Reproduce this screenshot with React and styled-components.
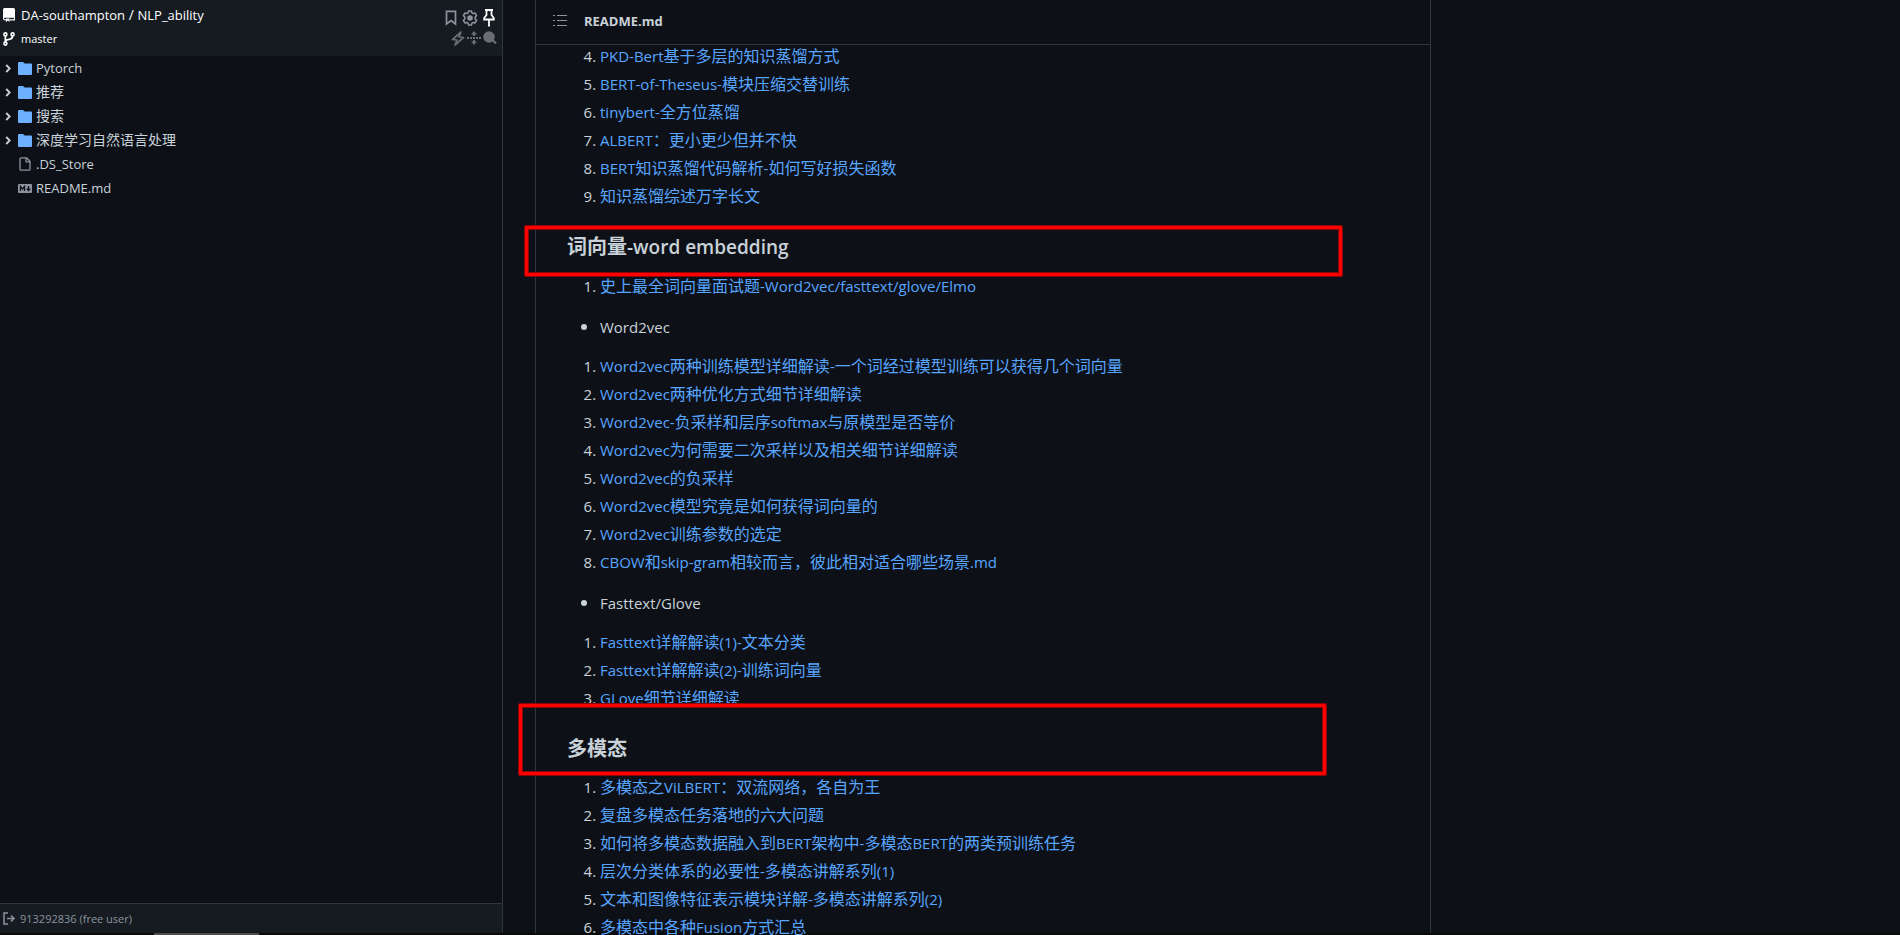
import React from 'react';
import styled, { createGlobalStyle } from 'styled-components';

const colors = {
  canvas: '#0d1117',
  subtle: '#161b22',
  border: '#30363d',
  text: '#c9d1d9',
  muted: '#8b949e',
  link: '#58a6ff',
  folder: '#6cb0ff',
};

const GlobalStyle = createGlobalStyle`
  * { box-sizing: border-box; }
  body {
    margin: 0;
    background: ${colors.canvas};
    color: ${colors.text};
    font-family: "Open Sans", "Noto Sans CJK SC", sans-serif;
    font-size: 16px;
    line-height: 24px;
    overflow: hidden;
  }
`;

const Page = styled.div`
  display: flex;
  height: 100vh;
  border-bottom: 2px solid #0a0a0a;
`;

const Sidebar = styled.aside`
  position: relative;
  display: flex;
  flex-direction: column;
  flex: 0 0 503px;
  border-right: 1px solid ${colors.border};
`;

const SidebarHeader = styled.header`
  display: flex;
  justify-content: space-between;
  height: 56px;
  padding: 3px 5px 4px 3px;
  background: ${colors.subtle};
`;

const HeaderLines = styled.div`
  display: flex;
  flex-direction: column;
`;

const HeaderLine = styled.div`
  display: flex;
  align-items: center;
  gap: 6px;
  height: 24px;
  color: #fff;
  font-size: ${(p) => (p.$small ? 11 : 14)}px;
`;

const HeaderLink = styled.a`
  color: inherit;
  text-decoration: none;
`;

const Tools = styled.div`
  display: flex;
  flex-direction: column;
  align-items: flex-end;
  padding-top: 5px;
`;

const ToolRow = styled.div`
  display: flex;
  align-items: center;
  gap: ${(p) => p.$gap}px;
  height: 20px;
  padding-right: ${(p) => p.$inset}px;
`;

const IconButton = styled.button`
  display: flex;
  padding: 0;
  border: 0;
  background: none;
  color: ${(p) => (p.$active ? '#fff' : p.$dim ? '#6a6e74' : colors.muted)};
  cursor: pointer;
`;

const Tree = styled.ul`
  flex: 1;
  margin: 0;
  padding: 0;
  list-style: none;
`;

const TreeItem = styled.li`
  display: grid;
  grid-template-columns: 12px 14px 1fr;
  align-items: center;
  column-gap: 4px;
  height: 24px;
  padding-left: 2px;
  font-size: 14px;
  white-space: nowrap;
`;

const TreeIcon = styled.span`
  display: flex;
  justify-content: center;
  color: ${(p) => p.$color};
`;

const TreeLink = styled.a`
  color: ${colors.text};
  text-decoration: none;
`;

const SidebarFooter = styled.footer`
  display: flex;
  align-items: center;
  gap: 4px;
  height: 30px;
  padding-left: 3px;
  border-top: 1px solid ${colors.border};
  background: ${colors.subtle};
  color: ${colors.muted};
  font-size: 11px;
`;

const ScrollThumb = styled.div`
  position: absolute;
  bottom: -2px;
  left: 154px;
  width: 105px;
  height: 2px;
  background: #4d4d4d;
`;

const Main = styled.main`
  display: flex;
  flex: 1;
  min-width: 0;
  padding: 0 32px;
`;

const Readme = styled.article`
  display: flex;
  flex-direction: column;
  flex: 0 1 896px;
  min-width: 0;
  border: solid ${colors.border};
  border-width: 0 1px;
`;

const ReadmeHeader = styled.header`
  display: flex;
  flex: none;
  align-items: center;
  gap: 16px;
  height: 45px;
  padding: 0 16px 2px;
  border-bottom: 1px solid ${colors.border};
`;

const FileName = styled.h2`
  margin: 0;
  font-size: 13px;
  font-weight: 700;
`;

const Body = styled.div`
  flex: 1;
  min-height: 0;
  padding: 0 32px 0 31px;
`;

const Heading = styled.h3`
  position: relative;
  margin: 24px 0 14px;
  font-size: 20px;
  font-weight: 600;
  line-height: 27px;
`;

const Marker = styled.span`
  position: absolute;
  top: ${(p) => p.$top}px;
  right: ${(p) => p.$right}px;
  left: ${(p) => p.$left}px;
  height: ${(p) => p.$height}px;
  border: 3px solid #f00;
  border-radius: 1px;
  box-shadow: 0 0 0 1px #8b0509, inset 0 0 0 1px #8b0509;
  pointer-events: none;
`;

const Ordered = styled.ol`
  margin: 0 0 16px;
  padding-left: 33px;
`;

const Bullets = styled.ul`
  margin: 0 0 16px;
  padding-left: 33px;
`;

const Item = styled.li`
  height: 24px;
  line-height: 22px;
  white-space: nowrap;

  & + & {
    margin-top: 4px;
  }

  &::marker {
    font-size: ${(p) => (p.$bullet ? 18 : 15)}px;
  }
`;

const DocLink = styled.a`
  color: ${colors.link};
  text-decoration: none;
`;

const Latin = styled.span`
  font-size: ${(p) => p.$size}px;
`;

// Latin letters are set one pixel smaller than the Chinese ones beside them.
function Mixed({ children, size = 15 }) {
  return children
    .split(/([\x20-\x7e]+)/)
    .filter(Boolean)
    .map((part, i) => (/^[\x20-\x7e]/.test(part) ? <Latin key={i} $size={size}>{part}</Latin> : part));
}

function RepoIcon() {
  return (
    <svg width="12" height="14" viewBox="0 0 12 14" aria-hidden="true">
      <path fill="#fff" d="M1.500 0h9A1.500 1.500 0 0 1 12 1.500v8.700H0V1.500A1.500 1.500 0 0 1 1.500 0Z" />
      <path fill="none" stroke="#fff" strokeWidth="1.200" d="M.6 9v1.600c0 .8.500 1.200 1.200 1.200H3M7 11.800h4.400V9" />
      <path fill="#161b22" d="M1.300 9.800h9.500v1.200H1.300Z" />
      <path fill="#fff" d="M3 10.500h3.600V14L4.800 12.600 3 14Z" />
    </svg>
  );
}

function BranchIcon() {
  return (
    <svg width="12" height="14" viewBox="0 0 12 14" fill="none" stroke="#fff" aria-hidden="true">
      <path strokeWidth="1.800" d="M2.400 3v8M9.600 3.500c0 3-1.500 3.700-3.600 3.900S2.400 8.500 2.400 10" />
      <circle cx="2.400" cy="2.400" r="1.500" fill="#161b22" strokeWidth="1.600" />
      <circle cx="9.600" cy="2.400" r="1.500" fill="#161b22" strokeWidth="1.600" />
      <circle cx="2.400" cy="11.600" r="1.500" fill="#161b22" strokeWidth="1.600" />
    </svg>
  );
}

function BookmarkIcon() {
  return (
    <svg width="12" height="16" viewBox="0 0 12 16" fill="none" stroke="currentColor" strokeWidth="1.700" aria-hidden="true">
      <path d="M1.500 1.300h9v12.700L6 10.500 1.500 14Z" />
    </svg>
  );
}

function GearIcon() {
  return (
    <svg width="16" height="16" viewBox="0 0 16 16" fill="none" stroke="currentColor" aria-hidden="true">
      <path strokeWidth="1.600" strokeLinejoin="round" d="M6.600 1h2.800l.5 1.900 1.300.7 1.900-.5 1.500 2.500-1.400 1.400v2l1.400 1.400-1.500 2.500-1.900-.5-1.300.7-.5 1.900H6.600l-.5-1.900-1.300-.7-1.900.5-1.500-2.500L2.800 9V7L1.400 5.600l1.500-2.500 1.900.5 1.300-.7Z" />
      <circle cx="8" cy="8" r="2.800" fill="currentColor" stroke="none" />
    </svg>
  );
}

function PinIcon() {
  return (
    <svg width="12" height="18" viewBox="0 0 12 18" fill="none" stroke="currentColor" strokeWidth="1.800" aria-hidden="true">
      <path d="M2 1h8M3.500 1v5L1.200 9v1.500h9.600V9L8.500 6V1M6 10.500V17.500" />
    </svg>
  );
}

function BoltIcon() {
  return (
    <svg width="14" height="15" viewBox="0 0 14 15" fill="none" stroke="currentColor" strokeWidth="1.700" strokeLinejoin="round" aria-hidden="true">
      <path d="M10 1 1.500 8.500 6 9 4 14l8.500-7.500L8 6Z" />
    </svg>
  );
}

function MoveIcon() {
  return (
    <svg width="14" height="14" viewBox="0 0 14 14" fill="currentColor" aria-hidden="true">
      <path d="M7 0 10 3.500H8V5H6V3.500H4ZM7 14 4 10.500H6V9h2v1.500h2ZM0 6h2v2H0ZM3 6h2v2H3ZM6 6h2v2H6ZM9 6h2v2H9ZM12 6h2v2h-2Z" />
    </svg>
  );
}

function SearchIcon() {
  return (
    <svg width="14" height="14" viewBox="0 0 14 14" fill="currentColor" aria-hidden="true">
      <circle cx="6" cy="6" r="5.800" />
      <path d="m9 10 1.500-1.500 3.300 3.300-1.500 1.500Z" />
    </svg>
  );
}

function ChevronIcon() {
  return (
    <svg width="6" height="9" viewBox="0 0 6 9" fill="none" stroke="currentColor" strokeWidth="1.800" aria-hidden="true">
      <path d="m1.200 1 3.500 3.500L1.200 8" />
    </svg>
  );
}

function FolderIcon() {
  return (
    <svg width="14" height="13" viewBox="0 0 14 13" fill="currentColor" aria-hidden="true">
      <path d="M1 0h3.800c.4 0 .7.200.9.500L6.500 1.600H13a1 1 0 0 1 1 1V12a1 1 0 0 1-1 1H1a1 1 0 0 1-1-1V1a1 1 0 0 1 1-1Z" />
    </svg>
  );
}

function FileIcon() {
  return (
    <svg width="12" height="14" viewBox="0 0 12 14" fill="none" stroke="currentColor" strokeWidth="1.300" strokeLinejoin="round" aria-hidden="true">
      <path d="M2 .8h5.500L11 4.300v7.900a1 1 0 0 1-1 1H2a1 1 0 0 1-1-1V1.800a1 1 0 0 1 1-1ZM7 .8v4h4" />
    </svg>
  );
}

function MarkdownIcon() {
  return (
    <svg width="14" height="9" viewBox="0 0 14 9" aria-hidden="true">
      <rect width="14" height="9" rx="1" fill="currentColor" />
      <path fill="none" stroke="#0d1117" strokeWidth="1.300" d="M2.500 7V2.500L4.500 5l2-2.500V7M10.500 2v4M8.700 4.600l1.800 2 1.800-2" />
    </svg>
  );
}

function SignOutIcon() {
  return (
    <svg width="13" height="13" viewBox="0 0 13 13" fill="none" stroke="currentColor" strokeWidth="1.500" aria-hidden="true">
      <path d="M5 1H1v11h4M4 6.500h7M8 3.500l3 3-3 3" />
    </svg>
  );
}

function ListIcon() {
  return (
    <svg width="16" height="16" viewBox="0 0 16 16" fill="currentColor" aria-hidden="true">
      <path d="M5 2h10v1H5ZM5 7h10v1H5ZM5 12h10v1H5ZM1 2h2v1H1ZM1 7h2v1H1ZM1 12h2v1H1Z" />
    </svg>
  );
}

const files = [
  { name: 'Pytorch', kind: 'folder' },
  { name: '推荐', kind: 'folder' },
  { name: '搜索', kind: 'folder' },
  { name: '深度学习自然语言处理', kind: 'folder' },
  { name: '.DS_Store', kind: 'file' },
  { name: 'README.md', kind: 'markdown' },
];

const fileIcons = {
  folder: <FolderIcon />,
  file: <FileIcon />,
  markdown: <MarkdownIcon />,
};

const distillation = [
  'PKD-Bert基于多层的知识蒸馏方式',
  'BERT-of-Theseus-模块压缩交替训练',
  'tinybert-全方位蒸馏',
  'ALBERT：更小更少但并不快',
  'BERT知识蒸馏代码解析-如何写好损失函数',
  '知识蒸馏综述万字长文',
];

const embeddings = ['史上最全词向量面试题-Word2vec/fasttext/glove/Elmo'];

const word2vec = [
  'Word2vec两种训练模型详细解读-一个词经过模型训练可以获得几个词向量',
  'Word2vec两种优化方式细节详细解读',
  'Word2vec-负采样和层序softmax与原模型是否等价',
  'Word2vec为何需要二次采样以及相关细节详细解读',
  'Word2vec的负采样',
  'Word2vec模型究竟是如何获得词向量的',
  'Word2vec训练参数的选定',
  'CBOW和skip-gram相较而言，彼此相对适合哪些场景.md',
];

const fasttext = ['Fasttext详解解读(1)-文本分类', 'Fasttext详解解读(2)-训练词向量', 'GLove细节详细解读'];

const multimodal = [
  '多模态之ViLBERT：双流网络，各自为王',
  '复盘多模态任务落地的六大问题',
  '如何将多模态数据融入到BERT架构中-多模态BERT的两类预训练任务',
  '层次分类体系的必要性-多模态讲解系列(1)',
  '文本和图像特征表示模块详解-多模态讲解系列(2)',
  '多模态中各种Fusion方式汇总',
];

function LinkList({ items, start = 1 }) {
  return (
    <Ordered start={start}>
      {items.map((text) => (
        <Item key={text}>
          <DocLink href="#"><Mixed>{text}</Mixed></DocLink>
        </Item>
      ))}
    </Ordered>
  );
}

function Topic({ children }) {
  return (
    <Bullets>
      <Item $bullet><Mixed>{children}</Mixed></Item>
    </Bullets>
  );
}

export default function App() {
  return (
    <>
      <GlobalStyle />
      <Page lang="zh-CN">
        <Sidebar>
          <SidebarHeader>
            <HeaderLines>
              <HeaderLine>
                <RepoIcon />
                <span>
                  <HeaderLink href="#"><Mixed size={13}>DA-southampton</Mixed></HeaderLink>
                  {' / '}
                  <HeaderLink href="#"><Mixed size={13}>NLP_ability</Mixed></HeaderLink>
                </span>
              </HeaderLine>
              <HeaderLine $small>
                <BranchIcon />
                <span>master</span>
              </HeaderLine>
            </HeaderLines>
            <Tools>
              <ToolRow $gap={5} $inset={2}>
                <IconButton aria-label="Bookmarks"><BookmarkIcon /></IconButton>
                <IconButton aria-label="Settings"><GearIcon /></IconButton>
                <IconButton aria-label="Pin sidebar" $active><PinIcon /></IconButton>
              </ToolRow>
              <ToolRow $gap={2} $inset={0}>
                <IconButton aria-label="Quick actions" $dim><BoltIcon /></IconButton>
                <IconButton aria-label="Collapse all" $dim><MoveIcon /></IconButton>
                <IconButton aria-label="Search" $dim><SearchIcon /></IconButton>
              </ToolRow>
            </Tools>
          </SidebarHeader>
          <Tree>
            {files.map((file) => (
              <TreeItem key={file.name}>
                <TreeIcon $color={colors.text}>{file.kind === 'folder' && <ChevronIcon />}</TreeIcon>
                <TreeIcon $color={file.kind === 'folder' ? colors.folder : colors.muted}>{fileIcons[file.kind]}</TreeIcon>
                <TreeLink href="#"><Mixed size={13}>{file.name}</Mixed></TreeLink>
              </TreeItem>
            ))}
          </Tree>
          <SidebarFooter>
            <SignOutIcon />
            <span>913292836 (free user)</span>
          </SidebarFooter>
          <ScrollThumb />
        </Sidebar>
        <Main>
          <Readme>
            <ReadmeHeader>
              <IconButton aria-label="Table of contents"><ListIcon /></IconButton>
              <FileName>README.md</FileName>
            </ReadmeHeader>
            <Body>
              <LinkList items={distillation} start={4} />
              <Heading>
                <Mixed size={19}>词向量-word embedding</Mixed>
                <Marker $top={-7} $left={-42} $right={56} $height={50} />
              </Heading>
              <LinkList items={embeddings} />
              <Topic>Word2vec</Topic>
              <LinkList items={word2vec} />
              <Topic>Fasttext/Glove</Topic>
              <LinkList items={fasttext} />
              <Heading>
                多模态
                <Marker $top={-31} $left={-48} $right={72} $height={71} />
              </Heading>
              <LinkList items={multimodal} />
            </Body>
          </Readme>
        </Main>
      </Page>
    </>
  );
}
